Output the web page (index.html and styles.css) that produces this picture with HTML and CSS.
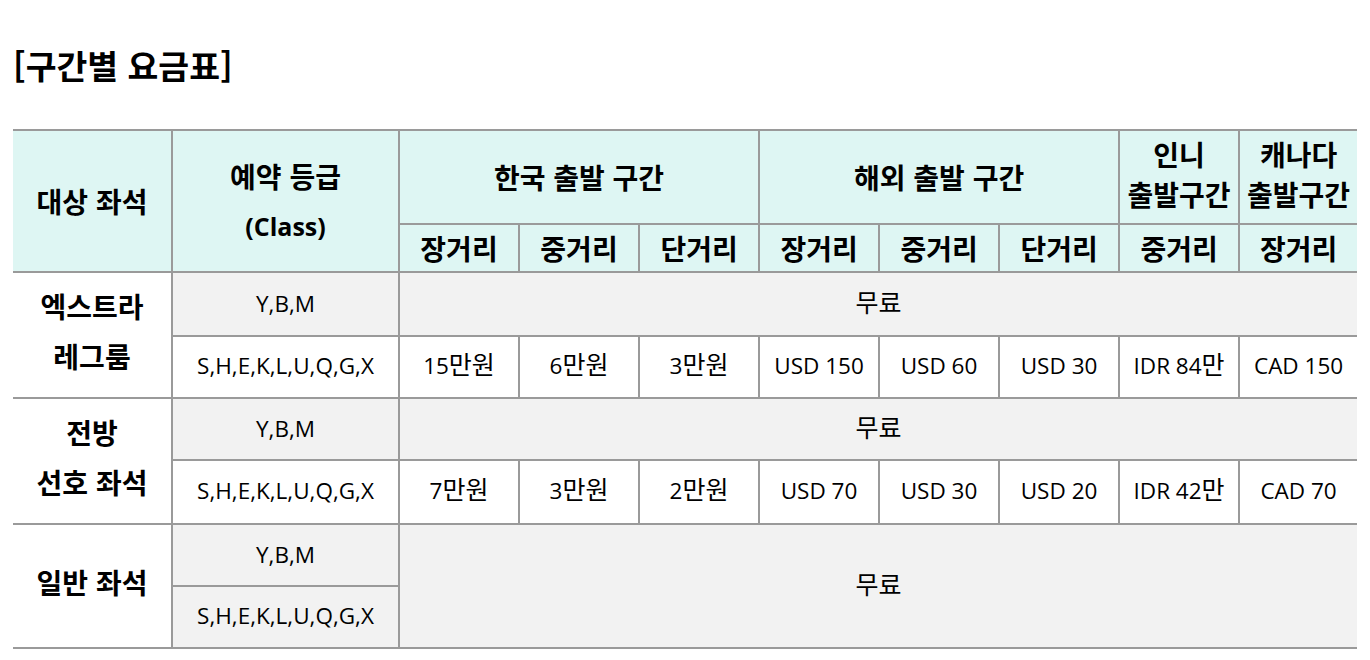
FILE: index.html
```html
<!DOCTYPE html>
<html lang="ko">
<head>
<meta charset="utf-8">
<title>구간별 요금표</title>
<link rel="stylesheet" href="styles.css">
</head>
<body>
<div class="page">
  <h2 class="title">[구간별 요금표]</h2>
  <table class="fare">
    <colgroup>
      <col class="c-seat">
      <col class="c-class">
      <col class="c-v"><col class="c-v"><col class="c-v">
      <col class="c-v"><col class="c-v"><col class="c-v">
      <col class="c-v"><col class="c-last">
    </colgroup>
    <thead>
      <tr class="h1">
        <th rowspan="2">대상 좌석</th>
        <th rowspan="2" class="cls"><span class="l1">예약 등급</span><span class="l2">(Class)</span></th>
        <th colspan="3">한국 출발 구간</th>
        <th colspan="3">해외 출발 구간</th>
        <th class="two">인니<br>출발구간</th>
        <th class="two">캐나다<br>출발구간</th>
      </tr>
      <tr class="h2">
        <th>장거리</th><th>중거리</th><th>단거리</th>
        <th>장거리</th><th>중거리</th><th>단거리</th>
        <th>중거리</th><th>장거리</th>
      </tr>
    </thead>
    <tbody>
      <tr class="r-a tall">
        <td rowspan="2" class="seat">엑스트라<br>레그룸</td>
        <td class="gray">Y,B,M</td>
        <td colspan="8" class="gray"><span class="ko">무료</span></td>
      </tr>
      <tr class="r-b">
        <td>S,H,E,K,L,U,Q,G,X</td>
        <td>15<span class="ko">만원</span></td><td>6<span class="ko">만원</span></td><td>3<span class="ko">만원</span></td>
        <td>USD 150</td><td>USD 60</td><td>USD 30</td>
        <td>IDR 84<span class="ko">만</span></td><td>CAD 150</td>
      </tr>
      <tr class="r-a">
        <td rowspan="2" class="seat">전방<br>선호 좌석</td>
        <td class="gray">Y,B,M</td>
        <td colspan="8" class="gray"><span class="ko">무료</span></td>
      </tr>
      <tr class="r-b tall">
        <td>S,H,E,K,L,U,Q,G,X</td>
        <td>7<span class="ko">만원</span></td><td>3<span class="ko">만원</span></td><td>2<span class="ko">만원</span></td>
        <td>USD 70</td><td>USD 30</td><td>USD 20</td>
        <td>IDR 42<span class="ko">만</span></td><td>CAD 70</td>
      </tr>
      <tr class="r-a">
        <td rowspan="2" class="seat">일반 좌석</td>
        <td class="gray">Y,B,M</td>
        <td colspan="8" rowspan="2" class="gray"><span class="ko">무료</span></td>
      </tr>
      <tr class="r-b">
        <td class="gray">S,H,E,K,L,U,Q,G,X</td>
      </tr>
    </tbody>
  </table>
</div>
</body>
</html>
```

FILE: styles.css
```css
html, body {
  margin: 0;
  padding: 0;
  background: #ffffff;
}

body {
  font-family: "Open Sans", "Noto Sans CJK KR", sans-serif;
  color: #000000;
}

.page {
  padding: 0 13px;
}

.title {
  margin: 44px 0 0 0;
  font-family: "Noto Sans CJK KR", sans-serif;
  font-size: 33.5px;
  line-height: 42px;
  font-weight: 700;
}

.fare {
  margin-top: 43px;
  width: 1344px;
  border-collapse: collapse;
  table-layout: fixed;
}

.c-seat { width: 159px; }
.c-class { width: 227px; }
.c-v { width: 120px; }
.c-last { width: 118px; }

.fare th,
.fare td {
  border: 2px solid #9a9a9a;
  padding: 0;
  text-align: center;
  vertical-align: middle;
}

.fare tr > :first-child { border-left: none; }
.fare tr > :last-child { border-right: none; }
.fare tbody tr:not(:first-child) > .seat { border-left: none; }

.fare th {
  background: #def6f3;
  font-family: "Noto Sans CJK KR", sans-serif;
  font-weight: 700;
  font-size: 28px;
  line-height: 40px;
  white-space: nowrap;
}

.fare .h1 th { height: 92px; }
.fare .h1 th.two {
  height: 86px;
  padding-bottom: 6px;
}
.fare .h2 th { height: 46px; }

.cls .l1,
.cls .l2 {
  display: block;
  line-height: 50px;
}
.cls .l2 {
  font-family: "Open Sans", "Noto Sans CJK KR", sans-serif;
  font-size: 25px;
}

.fare td {
  font-size: 22.5px;
  line-height: 30px;
  background: #ffffff;
}

.fare .r-a td { height: 60px; }
.fare .r-a.tall td { height: 62px; }

.fare .r-b td {
  height: 57px;
  padding-bottom: 3px;
}
.fare .r-b.tall td { height: 59px; }

.fare td .ko {
  font-family: "Noto Sans CJK KR", sans-serif;
  font-size: 25px;
  line-height: 20px;
}

.fare td.gray { background: #f2f2f2; }

.fare td.seat {
  font-family: "Noto Sans CJK KR", sans-serif;
  font-weight: 700;
  font-size: 28px;
  line-height: 50px;
  height: auto;
  padding-bottom: 8px;
}
```
